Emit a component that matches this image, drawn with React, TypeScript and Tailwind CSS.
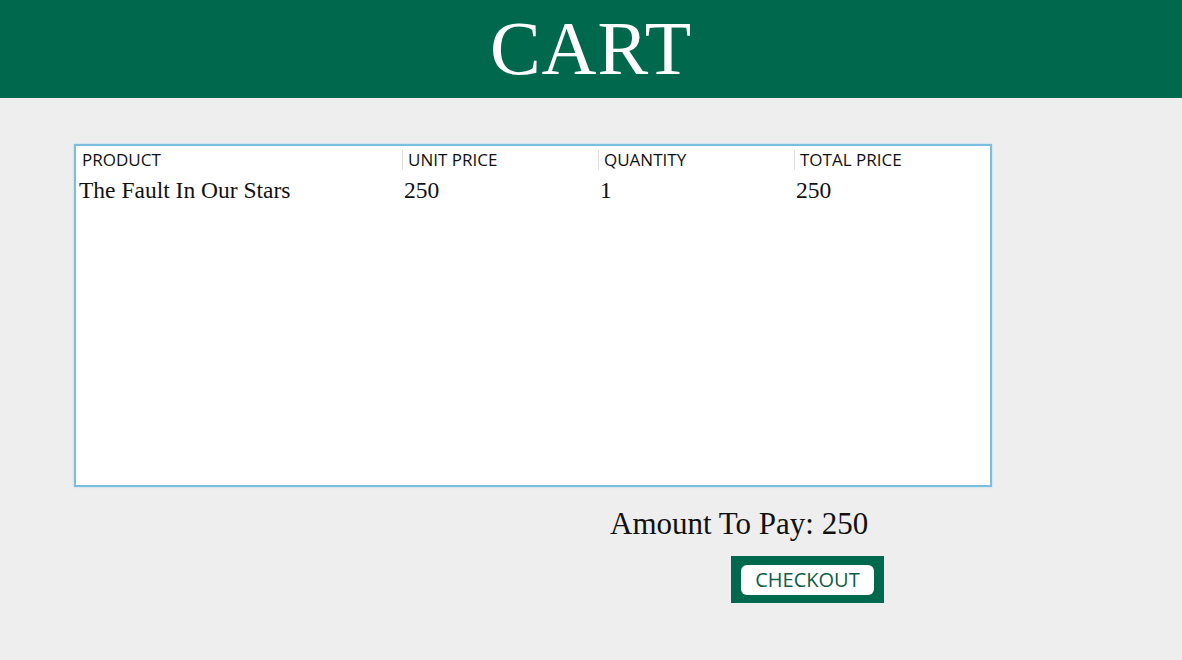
const items = [
  { name: "The Fault In Our Stars", price: 250, qty: 1 },
];

export default function App() {
  const total = items.reduce((s, i) => s + i.price * i.qty, 0);

  return (
    <div className="min-h-[660px] bg-[#eeeeee]">
      <header className="h-[98px] bg-[#00694d] flex items-center justify-center">
        <h1 className="text-white text-[76px] leading-none font-['Liberation_Serif',serif] tracking-[1px] mt-[-2px]">
          CART
        </h1>
      </header>

      <div className="pl-[74px] pt-[46px]">
        <div className="w-[918px] h-[343px] bg-white border-2 border-[#7cbde0] shadow-[0_0_2px_#a9d8ef]">
          <div className="grid grid-cols-[326px_196px_196px_1fr] pt-[4px]">
            {["PRODUCT", "UNIT PRICE", "QUANTITY", "TOTAL PRICE"].map((h, i) => (
              <div
                key={h}
                className={`h-[20px] flex items-center text-[17px] text-[#111] font-['Open_Sans',sans-serif] font-medium ${
                  i === 0 ? "pl-[6px]" : "pl-[5px] border-l border-[#dedede]"
                }`}
              >
                {h}
              </div>
            ))}
          </div>
          {items.map((it) => (
            <div
              key={it.name}
              className="grid grid-cols-[326px_196px_196px_1fr] mt-[9px] text-[23.5px] leading-none text-[#111] font-['Liberation_Serif',serif]"
            >
              <div className="pl-[3px]">{it.name}</div>
              <div className="pl-[2px]">{it.price}</div>
              <div className="pl-[2px]">{it.qty}</div>
              <div className="pl-[2px]">{it.price * it.qty}</div>
            </div>
          ))}
        </div>

        <div className="pl-[536px] pt-[21px] text-[31px] leading-none text-[#111] font-['Liberation_Serif',serif]">
          Amount To Pay: {total}
        </div>

        <div className="pl-[657px] pt-[17px]">
          <button className="w-[153px] h-[47px] bg-[#00694d] flex items-center justify-center">
            <span className="w-[133px] h-[30px] bg-white rounded-[6px] flex items-center justify-center text-[20px] text-[#0d5e48] font-['Open_Sans',sans-serif] font-medium">
              CHECKOUT
            </span>
          </button>
        </div>
      </div>
    </div>
  );
}
